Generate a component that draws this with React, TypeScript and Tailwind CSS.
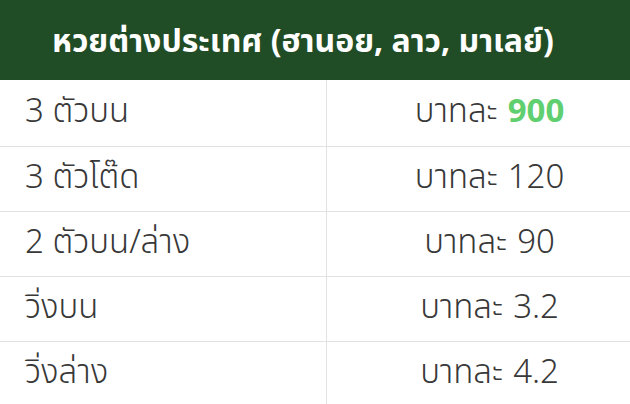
const rows: { label: string; price: string; highlight?: boolean }[] = [
  { label: "3 ตัวบน", price: "900", highlight: true },
  { label: "3 ตัวโต๊ด", price: "120" },
  { label: "2 ตัวบน/ล่าง", price: "90" },
  { label: "วิ่งบน", price: "3.2" },
  { label: "วิ่งล่าง", price: "4.2" },
];

export default function App() {
  return (
    <div
      className="w-[630px] h-[404px] overflow-hidden bg-white text-[#383838]"
      style={{ fontFamily: '"Noto Sans Thai", "Noto Sans", sans-serif' }}
    >
      <div className="h-[80px] bg-[#214d26] flex items-center pl-[52px] pt-[3px]">
        <h1 className="text-white text-[32px] font-bold">
          หวยต่างประเทศ (ฮานอย, ลาว, มาเลย์)
        </h1>
      </div>
      {rows.map((r, i) => (
        <div
          key={r.label}
          className={`flex border-b border-[#e2e2e2] ${i === 0 ? "h-[67px]" : "h-[65px]"}`}
        >
          <div className="w-[327px] border-r border-[#e2e2e2] flex items-center pl-[25px] text-[33px] font-light">
            {r.label}
          </div>
          <div className="flex-1 flex items-center justify-center pl-[22px] text-[33px] font-light">
            บาทละ
            {r.highlight ? (
              <span className="ml-[10px] font-bold text-[#5fcf6f]">{r.price}</span>
            ) : (
              <span className="ml-[10px]">{r.price}</span>
            )}
          </div>
        </div>
      ))}
    </div>
  );
}
